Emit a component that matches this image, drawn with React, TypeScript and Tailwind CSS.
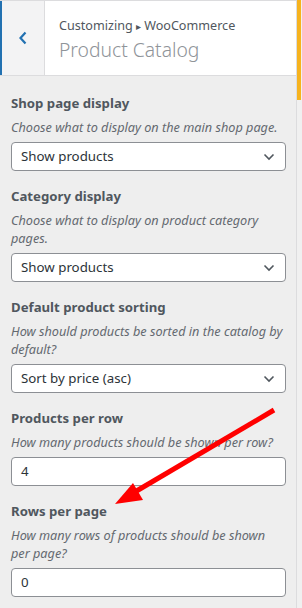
import React from "react";

const Chevron = () => (
  <svg width="12" height="8" viewBox="0 0 12 8" className="absolute right-[10px] top-1/2 -translate-y-1/2">
    <path d="M1.5 1.5 L6 6 L10.5 1.5" fill="none" stroke="#50575e" strokeWidth="1.6" />
  </svg>
);

const Select = ({ value }: { value: string }) => (
  <div className="relative h-[29px] w-[275px] rounded-[4px] border border-[#8c8f94] bg-white pl-[9px] text-[13.3px] leading-[27px] text-[#2c3338]">
    {value}
    <Chevron />
  </div>
);

const Input = ({ value }: { value: string }) => (
  <div className="h-[29px] w-[275px] rounded-[4px] border border-[#8c8f94] bg-white pl-[9px] text-[13.3px] leading-[27px] text-[#2c3338]">
    {value}
  </div>
);

const Field = ({
  label,
  desc,
  children,
}: {
  label: string;
  desc: string;
  children: React.ReactNode;
}) => (
  <div className="flex flex-col">
    <div className="text-[13.2px] font-bold leading-[20px] text-[#50575e]">{label}</div>
    <div className="mt-[5px] mb-[6px] text-[12.7px] italic leading-[18px] text-[#646970]">{desc}</div>
    {children}
  </div>
);

export default function App() {
  return (
    <div
      className="relative h-[608px] w-[302px] overflow-hidden bg-[#eeeeee]"
      style={{ fontFamily: '"Noto Sans", "Open Sans", sans-serif' }}
    >
      <div className="flex h-full">
        <div className="flex w-[297px] flex-col border-r border-[#dcdcde]">
          <div className="flex h-[76px] border-y border-[#dcdcde] bg-white">
            <div className="flex w-[45px] items-center justify-center border-l-[2px] border-r border-l-[#2271b1] border-r-[#dcdcde] bg-[#f3f3f4]">
              <svg width="10" height="14" viewBox="0 0 10 14">
                <path d="M7.5 1.5 L2.5 7 L7.5 12.5" fill="none" stroke="#2271b1" strokeWidth="2.2" />
              </svg>
            </div>
            <div className="flex flex-col justify-center pl-[14px] pt-[2px]">
              <div className="text-[12.6px] leading-[18px] text-[#50575e]">
                Customizing <span className="text-[10px]">▸</span> WooCommerce
              </div>
              <div className="mt-[3px] text-[19.3px] font-light leading-[24px] text-[#8f9499]">
                Product Catalog
              </div>
            </div>
          </div>
          <div className="flex flex-col gap-[15px] px-[11px] pt-[17px]">
            <Field label="Shop page display" desc="Choose what to display on the main shop page.">
              <Select value="Show products" />
            </Field>
            <Field label="Category display" desc="Choose what to display on product category pages.">
              <Select value="Show products" />
            </Field>
            <Field label="Default product sorting" desc="How should products be sorted in the catalog by default?">
              <Select value="Sort by price (asc)" />
            </Field>
            <Field label="Products per row" desc="How many products should be shown per row?">
              <Input value="4" />
            </Field>
            <Field label="Rows per page" desc="How many rows of products should be shown per page?">
              <Input value="0" />
            </Field>
          </div>
        </div>
        <div className="relative w-[5px] bg-[#f0f0f0]">
          <div className="absolute left-0 top-0 h-[100px] w-[4px] bg-[#f6b31e]" />
        </div>
      </div>
      <svg className="pointer-events-none absolute left-0 top-0" width="302" height="608">
        <line x1="274" y1="410" x2="128" y2="496" stroke="#ff0000" strokeWidth="5" />
        <polygon points="115,504 133,483 143,500" fill="#ff0000" />
      </svg>
    </div>
  );
}
